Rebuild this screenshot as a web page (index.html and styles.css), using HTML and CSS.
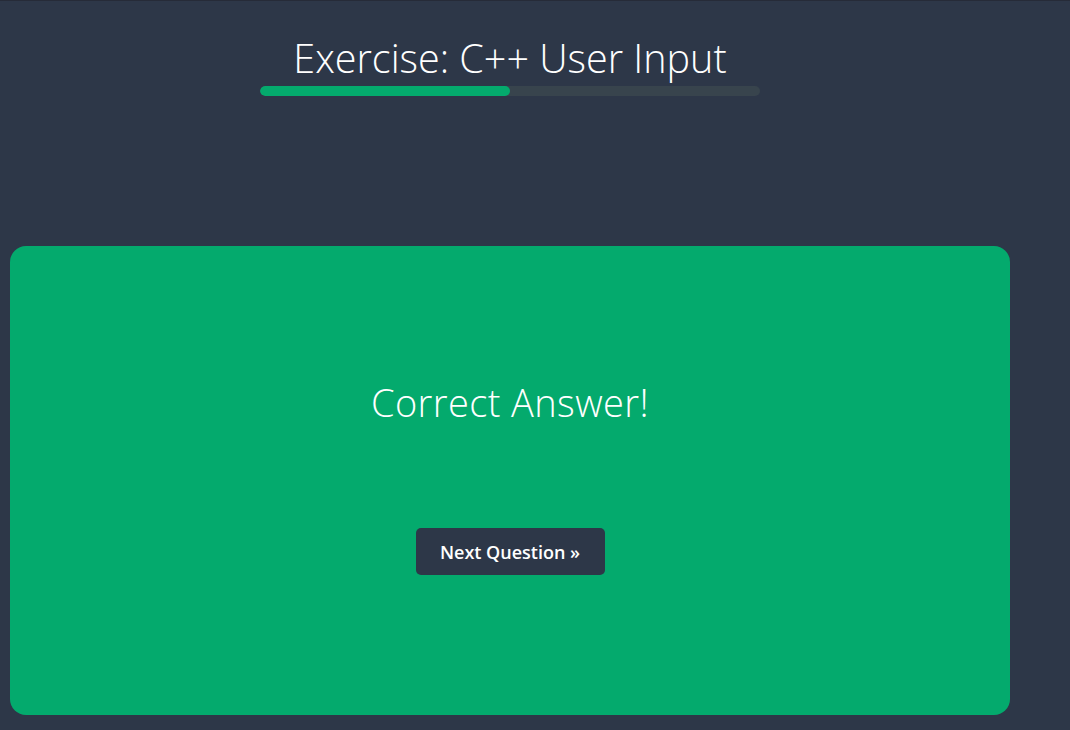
FILE: index.html
```html
<!DOCTYPE html>
<html>
<head>
<meta charset="utf-8">
<link rel="stylesheet" href="styles.css">
</head>
<body>
<div class="page">
  <header class="head">
    <h1 class="title">Exercise: C++ User Input</h1>
    <div class="progress"><div class="progress-fill" style="width:50%"></div></div>
  </header>
  <section class="card">
    <h2 class="result">Correct Answer!</h2>
    <button class="next">Next Question »</button>
  </section>
</div>
</body>
</html>
```

FILE: styles.css
```css
html, body { margin: 0; padding: 0; }
body {
  background: #2d3748;
  border-top: 1px solid #262b38;
  font-family: "Open Sans", "Noto Sans", sans-serif;
  color: #fff;
  height: 729px;
  overflow: hidden;
}
.page {
  width: 1000px;
  margin-left: 10px;
  display: flex;
  flex-direction: column;
  align-items: center;
}
.head {
  display: flex;
  flex-direction: column;
  align-items: center;
  padding-top: 32px;
}
.title {
  margin: 0;
  font-weight: 300;
  font-size: 39.5px;
  line-height: 50px;
  letter-spacing: 0;
}
.progress {
  width: 500px;
  height: 10px;
  border-radius: 5px;
  background: #38444d;
  margin-top: 3px;
  overflow: hidden;
}
.progress-fill {
  height: 100%;
  background: #04aa6d;
  border-radius: 5px;
}
.card {
  margin-top: 150px;
  width: 1000px;
  height: 469px;
  background: #04aa6d;
  border-radius: 16px;
  display: flex;
  flex-direction: column;
  align-items: center;
  box-sizing: border-box;
  padding-top: 126px;
}
.result {
  margin: 0;
  font-weight: 300;
  font-size: 38px;
  line-height: 60px;
  letter-spacing: 0.4px;
}
.next {
  margin-top: 96px;
  width: 189px;
  height: 47px;
  border: none;
  border-radius: 5px;
  background: #2d3748;
  color: #fff;
  font-family: "Open Sans", "Noto Sans", sans-serif;
  font-weight: 600;
  font-size: 18px;
  cursor: pointer;
}
```
